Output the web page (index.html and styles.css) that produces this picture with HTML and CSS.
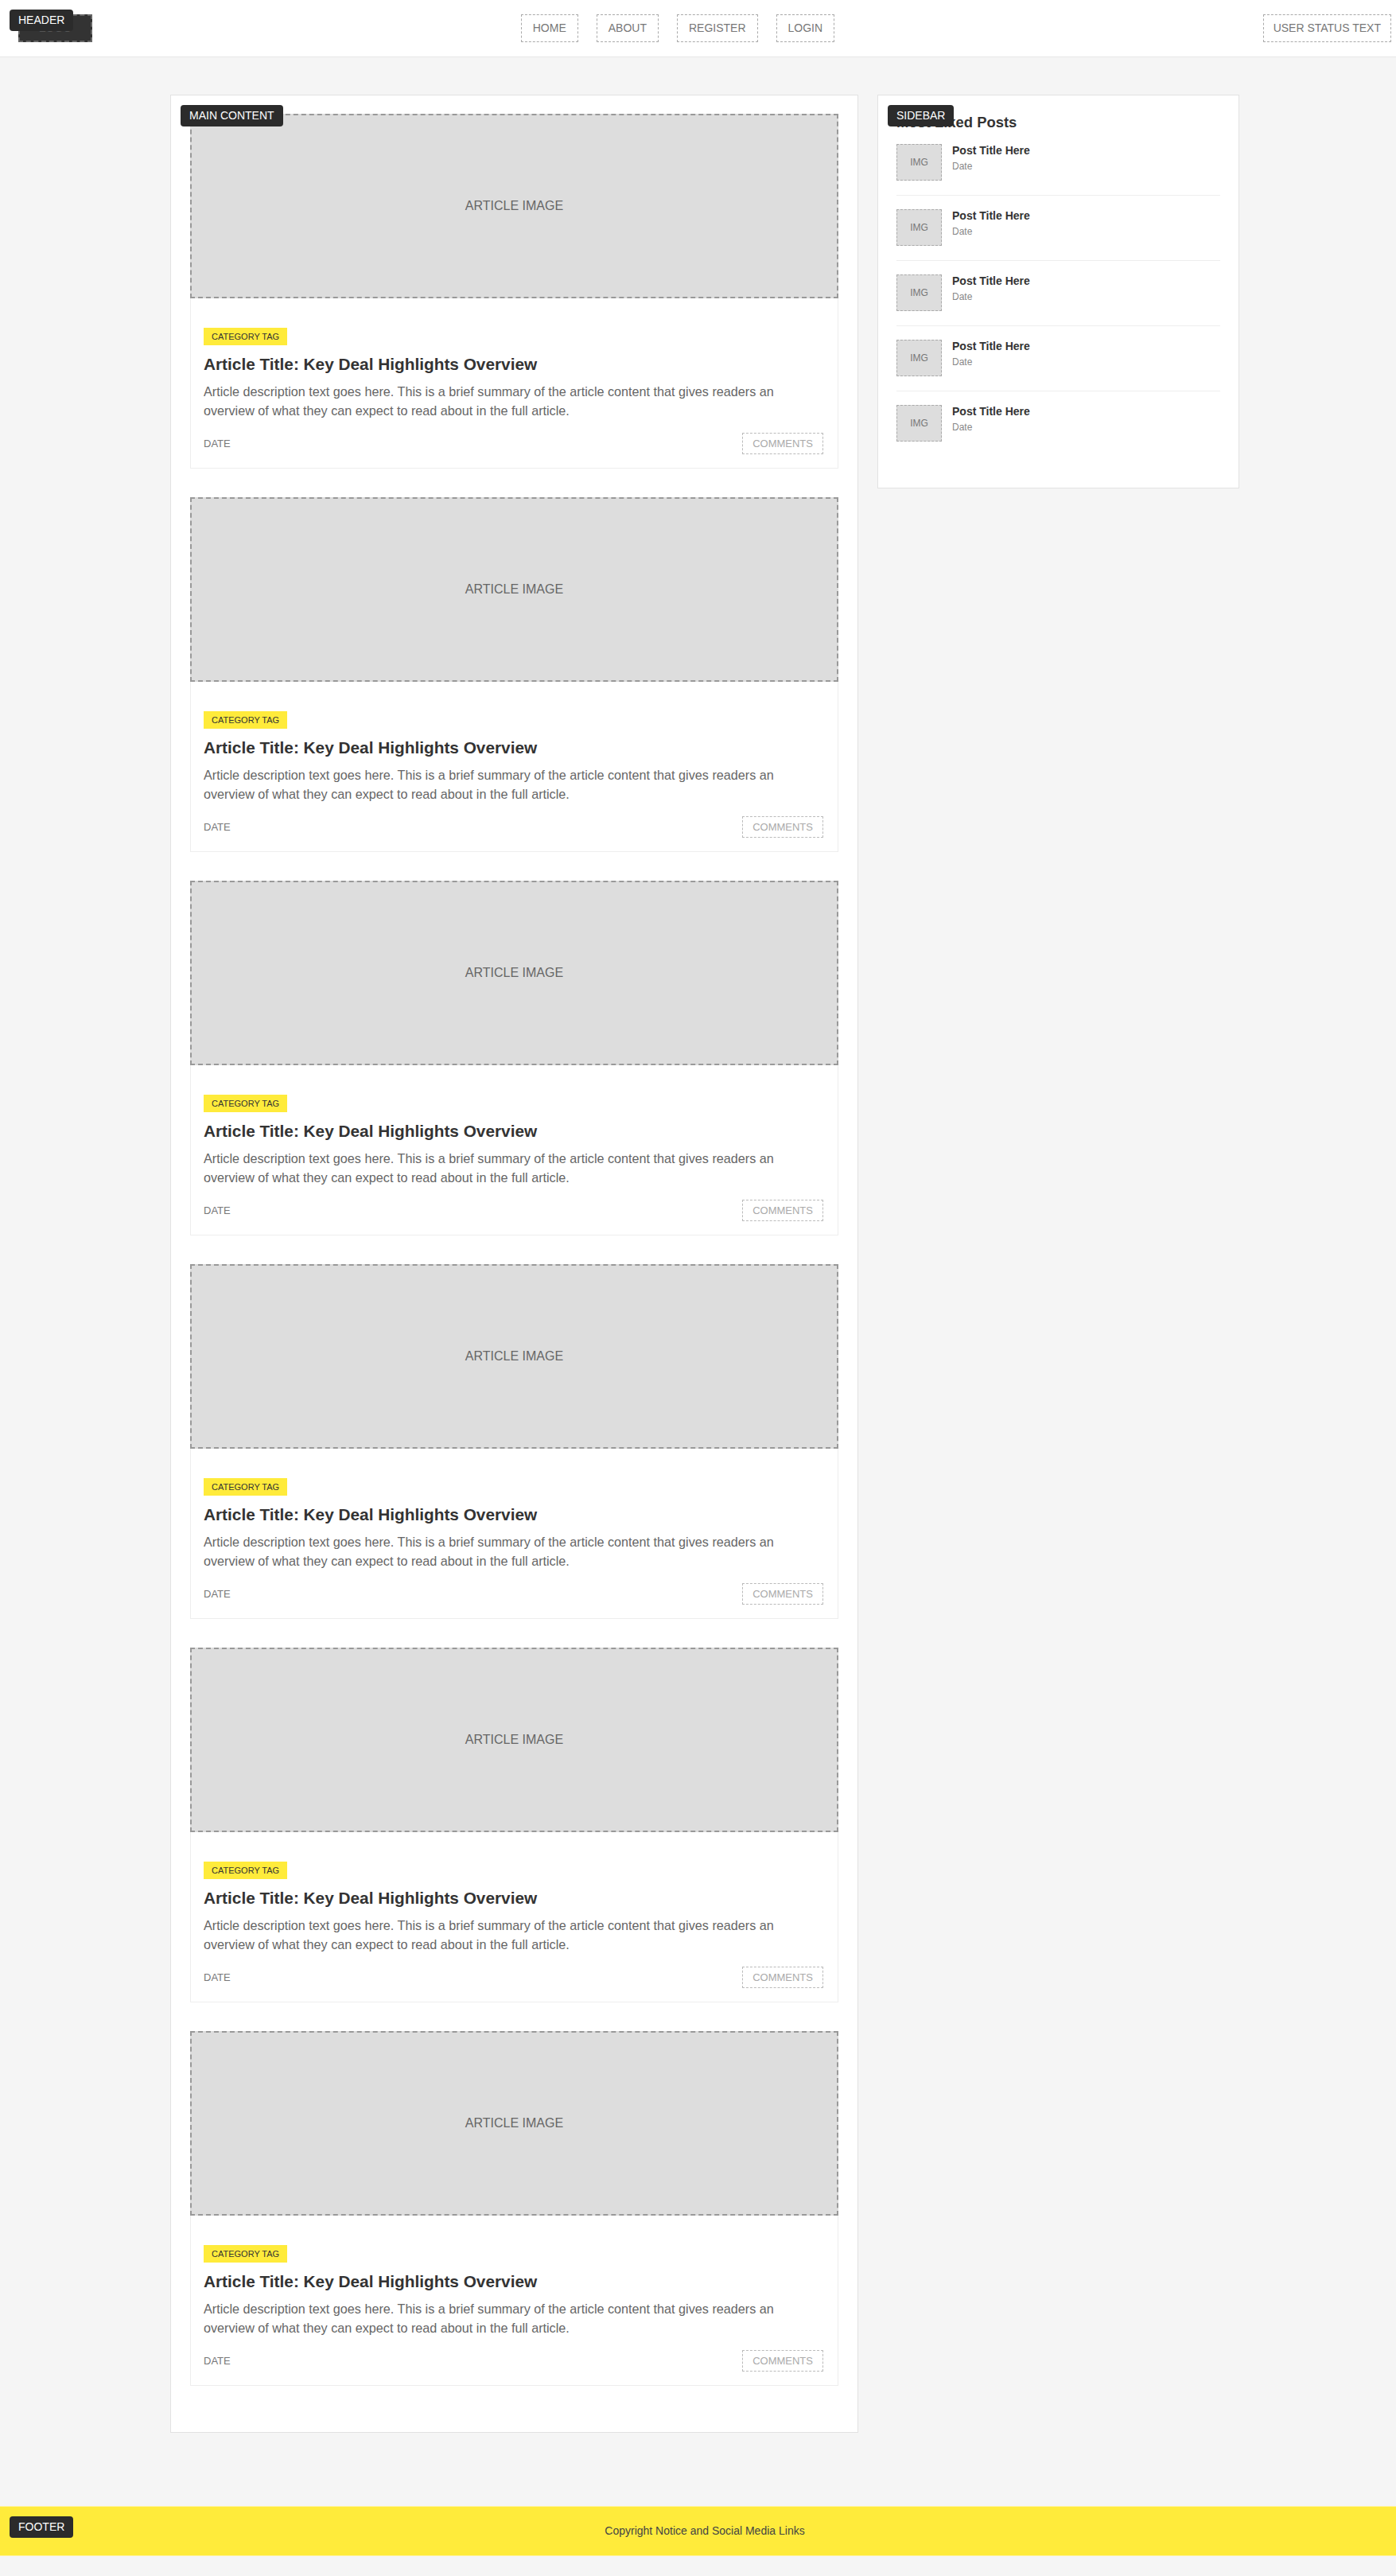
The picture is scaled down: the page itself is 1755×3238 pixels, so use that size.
FILE: index.html
```html
<!DOCTYPE html>
<html lang="en">
<head>
<meta charset="utf-8">
<title>Blog Layout</title>
<link rel="stylesheet" href="styles.css">
</head>
<body>
<header class="site-header">
  <span class="section-label">HEADER</span>
  <div class="logo">LOGO</div>
  <nav class="nav">
    <a class="nav-link" href="#">HOME</a>
    <a class="nav-link" href="#">ABOUT</a>
    <a class="nav-link" href="#">REGISTER</a>
    <a class="nav-link" href="#">LOGIN</a>
  </nav>
  <div class="user-status">USER STATUS TEXT</div>
</header>

<div class="shell">
  <div class="layout">
    <main class="main-content">
      <span class="section-label">MAIN CONTENT</span>

      <article class="card">
        <div class="card-image">ARTICLE IMAGE</div>
        <div class="card-body">
          <span class="tag">CATEGORY TAG</span>
          <h2 class="card-title">Article Title: Key Deal Highlights Overview</h2>
          <p class="card-desc">Article description text goes here. This is a brief summary of the article content that gives readers an overview of what they can expect to read about in the full article.</p>
          <div class="card-meta"><span class="date">DATE</span><span class="comments">COMMENTS</span></div>
        </div>
      </article>

      <article class="card">
        <div class="card-image">ARTICLE IMAGE</div>
        <div class="card-body">
          <span class="tag">CATEGORY TAG</span>
          <h2 class="card-title">Article Title: Key Deal Highlights Overview</h2>
          <p class="card-desc">Article description text goes here. This is a brief summary of the article content that gives readers an overview of what they can expect to read about in the full article.</p>
          <div class="card-meta"><span class="date">DATE</span><span class="comments">COMMENTS</span></div>
        </div>
      </article>

      <article class="card">
        <div class="card-image">ARTICLE IMAGE</div>
        <div class="card-body">
          <span class="tag">CATEGORY TAG</span>
          <h2 class="card-title">Article Title: Key Deal Highlights Overview</h2>
          <p class="card-desc">Article description text goes here. This is a brief summary of the article content that gives readers an overview of what they can expect to read about in the full article.</p>
          <div class="card-meta"><span class="date">DATE</span><span class="comments">COMMENTS</span></div>
        </div>
      </article>

      <article class="card">
        <div class="card-image">ARTICLE IMAGE</div>
        <div class="card-body">
          <span class="tag">CATEGORY TAG</span>
          <h2 class="card-title">Article Title: Key Deal Highlights Overview</h2>
          <p class="card-desc">Article description text goes here. This is a brief summary of the article content that gives readers an overview of what they can expect to read about in the full article.</p>
          <div class="card-meta"><span class="date">DATE</span><span class="comments">COMMENTS</span></div>
        </div>
      </article>

      <article class="card">
        <div class="card-image">ARTICLE IMAGE</div>
        <div class="card-body">
          <span class="tag">CATEGORY TAG</span>
          <h2 class="card-title">Article Title: Key Deal Highlights Overview</h2>
          <p class="card-desc">Article description text goes here. This is a brief summary of the article content that gives readers an overview of what they can expect to read about in the full article.</p>
          <div class="card-meta"><span class="date">DATE</span><span class="comments">COMMENTS</span></div>
        </div>
      </article>

      <article class="card">
        <div class="card-image">ARTICLE IMAGE</div>
        <div class="card-body">
          <span class="tag">CATEGORY TAG</span>
          <h2 class="card-title">Article Title: Key Deal Highlights Overview</h2>
          <p class="card-desc">Article description text goes here. This is a brief summary of the article content that gives readers an overview of what they can expect to read about in the full article.</p>
          <div class="card-meta"><span class="date">DATE</span><span class="comments">COMMENTS</span></div>
        </div>
      </article>
    </main>

    <aside class="sidebar">
      <span class="section-label">SIDEBAR</span>
      <h3 class="sidebar-title">Most Liked Posts</h3>
      <ul class="post-list">
        <li class="post-item"><div class="post-thumb">IMG</div><div class="post-info"><div class="post-title">Post Title Here</div><div class="post-date">Date</div></div></li>
        <li class="post-item"><div class="post-thumb">IMG</div><div class="post-info"><div class="post-title">Post Title Here</div><div class="post-date">Date</div></div></li>
        <li class="post-item"><div class="post-thumb">IMG</div><div class="post-info"><div class="post-title">Post Title Here</div><div class="post-date">Date</div></div></li>
        <li class="post-item"><div class="post-thumb">IMG</div><div class="post-info"><div class="post-title">Post Title Here</div><div class="post-date">Date</div></div></li>
        <li class="post-item"><div class="post-thumb">IMG</div><div class="post-info"><div class="post-title">Post Title Here</div><div class="post-date">Date</div></div></li>
      </ul>
    </aside>
  </div>
</div>

<footer class="site-footer">
  <span class="section-label">FOOTER</span>
  <p class="footer-text">Copyright Notice and Social Media Links</p>
</footer>
</body>
</html>
```

FILE: styles.css
```css
* {
  box-sizing: border-box;
}

html, body {
  margin: 0;
  padding: 0;
}

body {
  background: #f5f5f5;
  font-family: "Liberation Sans", Arial, sans-serif;
  color: #333;
}

.section-label {
  position: absolute;
  top: 12px;
  left: 12px;
  z-index: 5;
  background: #2b2b2b;
  color: #fff;
  font-size: 14px;
  line-height: 17px;
  padding: 5px 11px;
  border-radius: 4px;
}

/* Header */
.site-header {
  position: relative;
  display: flex;
  align-items: center;
  justify-content: space-between;
  background: #fff;
  padding: 18px 6px 18px 23px;
  border-bottom: 1px solid #e8e8e8;
}

.logo {
  background: #333;
  border: 2px dashed #666;
  color: #555;
  font-weight: bold;
  font-size: 14px;
  line-height: 15px;
  padding: 8px 24px;
  height: 35px;
}

.nav {
  display: flex;
  gap: 23px;
}

.nav-link {
  display: block;
  color: #777;
  text-decoration: none;
  font-size: 14px;
  line-height: 17px;
  padding: 8px 14px;
  border: 1px dashed #aaa;
}

.user-status {
  color: #777;
  font-size: 14px;
  line-height: 17px;
  padding: 8px 12px;
  border: 1px dashed #aaa;
}

/* Layout */
.shell {
  padding-left: 17px;
}

.layout {
  width: 1344px;
  margin: 47px auto 0;
  display: grid;
  grid-template-columns: 865px 455px;
  gap: 24px;
  align-items: start;
}

.main-content {
  position: relative;
  background: #fff;
  border: 1px solid #e2e2e2;
  padding: 23px 24px 22px;
}

.card {
  background: #fff;
  border: 1px solid #eee;
  margin-bottom: 36px;
}

.card-image {
  margin: -1px -1px 0;
  height: 232px;
  background: #ddd;
  border: 2px dashed #999;
  display: flex;
  align-items: center;
  justify-content: center;
  color: #666;
  font-size: 16px;
}

.card-body {
  padding: 37px 18px 17px 16px;
}

.tag {
  display: inline-block;
  background: #ffeb3b;
  color: #333;
  font-size: 11px;
  line-height: 14px;
  padding: 4px 10px;
}

.card-title {
  margin: 10px 0 0;
  font-size: 20.8px;
  line-height: 27px;
  font-weight: bold;
  color: #333;
}

.card-desc {
  margin: 9px 0 0;
  font-size: 16.2px;
  line-height: 24px;
  color: #666;
}

.card-meta {
  margin-top: 16px;
  display: flex;
  justify-content: space-between;
  align-items: center;
}

.date {
  font-size: 13px;
  color: #777;
}

.comments {
  font-size: 13px;
  line-height: 15px;
  color: #aaa;
  padding: 5px 12px;
  border: 1px dashed #bbb;
}

/* Sidebar */
.sidebar {
  position: relative;
  background: #fff;
  border: 1px solid #e2e2e2;
  padding: 23px 23px 40px;
}

.sidebar-title {
  margin: 0;
  font-size: 18.4px;
  line-height: 21px;
  font-weight: bold;
  color: #333;
}

.post-list {
  list-style: none;
  margin: 0;
  padding: 0;
}

.post-item {
  display: flex;
  gap: 13px;
  align-items: flex-start;
  padding: 17px 0 18px;
  border-bottom: 1px solid #eee;
}

.post-item:last-child {
  border-bottom: none;
}

.post-thumb {
  flex: 0 0 57px;
  width: 57px;
  height: 46px;
  background: #ddd;
  border: 1px dashed #aaa;
  display: flex;
  align-items: center;
  justify-content: center;
  font-size: 12px;
  color: #777;
}

.post-title {
  font-size: 14px;
  line-height: 17px;
  font-weight: bold;
  color: #333;
}

.post-date {
  margin-top: 4px;
  font-size: 12px;
  line-height: 14px;
  color: #888;
}

/* Footer */
.site-footer {
  position: relative;
  margin: 92px 0 23px;
  background: #ffeb3b;
  border-top: 1px solid #fff3a0;
  border-bottom: 1px solid #fff3a0;
  padding: 22px 0 22px 17px;
  text-align: center;
}

.footer-text {
  margin: 0;
  font-size: 14px;
  line-height: 17px;
  color: #444;
}
```
